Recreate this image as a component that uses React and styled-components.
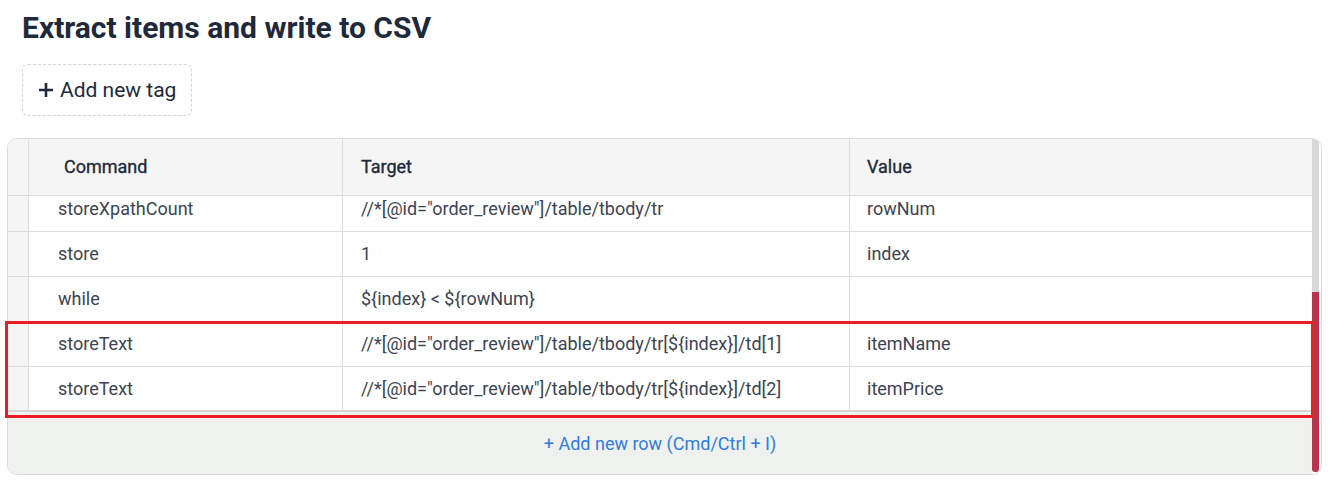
import React from 'react';
import styled, { createGlobalStyle } from 'styled-components';

const GlobalStyle = createGlobalStyle`
    body {
        margin: 0;
        background: #ffffff;
        font-family: Roboto, "Liberation Sans", Arial, sans-serif;
    }
`;

// layout
const Page = styled.div`
    width: 1330px;
    padding: 10px 0 0 7px;
    box-sizing: border-box;
`;

const Head = styled.div`
    padding-left: 15px;
`;

const Title = styled.h1`
    margin: 0;
    font-size: 30px;
    line-height: 35px;
    font-weight: 700;
    color: #1e2a3b;
`;

const TagButton = styled.button`
    display: inline-flex;
    align-items: center;
    gap: 6px;
    margin-top: 19px;
    height: 52px;
    padding: 0 15px 0 15px;
    border: 1px dashed #d4d4d4;
    border-radius: 6px;
    background: #ffffff;
    font-family: inherit;
    font-size: 21px;
    color: #1e2a3b;
    cursor: pointer;
`;

const TableWrap = styled.div`
    position: relative;
    margin-top: 22px;
    width: 1315px;
`;

const Table = styled.div`
    display: flex;
    border: 1px solid #dcdcdc;
    border-radius: 10px;
    overflow: hidden;
`;

const Main = styled.div`
    flex: 1;
    display: flex;
    flex-direction: column;
`;

const Grid = styled.div`
    display: grid;
    grid-template-columns: 21px 314px 507px 1fr;
    height: ${p => p.$height}px;
    background: ${p => p.$bg || '#ffffff'};
    border-bottom: 1px solid #dcdcdc;
    box-sizing: border-box;
`;

const Body = styled.div`
    height: 214px;
    overflow: hidden;
    border-bottom: 2px solid #d6d6d6;
`;

const Rows = styled.div`
    margin-top: -9px;
`;

const Cell = styled.div`
    display: flex;
    align-items: center;
    padding-left: ${p => p.$pad}px;
    padding-bottom: ${p => (p.$head ? 2 : 2)}px;
    border-right: ${p => (p.$last ? 'none' : '1px solid #dcdcdc')};
    font-size: 18px;
    color: ${p => (p.$head ? '#1e2a3b' : '#3b4456')};
    -webkit-text-stroke: ${p => (p.$head ? '0.35px #1e2a3b' : '0')};
    white-space: nowrap;
`;

const Gutter = styled.div`
    background: #f5f5f5;
    border-right: 1px solid #dcdcdc;
`;

const Footer = styled.div`
    height: 62px;
    display: flex;
    align-items: center;
    justify-content: center;
    background: #eff1ef;
    font-size: 18px;
    color: #2f7de1;
`;

const Scrollbar = styled.div`
    width: 9px;
    display: flex;
    flex-direction: column;
    background: #ffffff;
`;

const Track = styled.div`
    width: 7px;
    height: 153px;
    background: #d9d9d9;
`;

const Thumb = styled.div`
    width: 7px;
    height: 180px;
    background: #b9334b;
    border-radius: 0 0 3px 3px;
`;

const Highlight = styled.div`
    position: absolute;
    left: -2px;
    top: 183px;
    width: 1309px;
    height: 97px;
    border: 3px solid #ec1c24;
    box-sizing: border-box;
    pointer-events: none;
`;

const PAD = [29, 18, 17];

const rows = [
    ['storeXpathCount', '//*[@id="order_review"]/table/tbody/tr', 'rowNum'],
    ['store', '1', 'index'],
    ['while', '${index} < ${rowNum}', ''],
    ['storeText', '//*[@id="order_review"]/table/tbody/tr[${index}]/td[1]', 'itemName'],
    ['storeText', '//*[@id="order_review"]/table/tbody/tr[${index}]/td[2]', 'itemPrice'],
];

function Plus() {
    return (
        <svg width="16" height="16" viewBox="0 0 16 16">
            <path d="M8 1v14M1 8h14" stroke="#1e2a3b" strokeWidth="2.6" />
        </svg>
    );
}

function App() {
    return (
        <Page>
            <GlobalStyle />
            <Head>
                <Title>Extract items and write to CSV</Title>
                <TagButton><Plus />Add new tag</TagButton>
            </Head>
            <TableWrap>
                <Table>
                    <Main>
                        <Grid $height={57} $bg="#f5f5f5">
                            <Gutter />
                            <Cell $head $pad={35}>Command</Cell>
                            <Cell $head $pad={18}>Target</Cell>
                            <Cell $head $pad={17} $last>Value</Cell>
                        </Grid>
                        <Body>
                            <Rows>
                                {rows.map((r, i) => (
                                    <Grid key={i} $height={45}>
                                        <Gutter />
                                        {r.map((t, j) => (
                                            <Cell key={j} $pad={PAD[j]} $last={j === 2}>{t}</Cell>
                                        ))}
                                    </Grid>
                                ))}
                            </Rows>
                        </Body>
                        <Footer>+ Add new row (Cmd/Ctrl + I)</Footer>
                    </Main>
                    <Scrollbar>
                        <Track />
                        <Thumb />
                    </Scrollbar>
                </Table>
                <Highlight />
            </TableWrap>
        </Page>
    );
}

export default App;
